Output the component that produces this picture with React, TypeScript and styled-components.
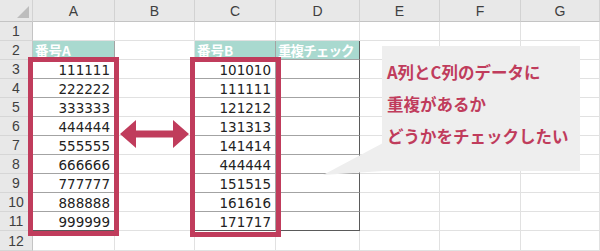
import styled, { createGlobalStyle } from "styled-components";

const GlobalStyle = createGlobalStyle`
  body {
    margin: 0;
    background: #ffffff;
  }
`;

const RED = "#c03c5c";

const Sheet = styled.div`
  position: relative;
  width: 600px;
  height: 251px;
  overflow: hidden;
  background: #ffffff;
`;

const Grid = styled.div`
  display: grid;
  grid-template-columns: 33px 82px 80px 81px 84px 80px 81px 79px;
  grid-template-rows: 22px repeat(11, 19px) 20px;
`;

const Corner = styled.div`
  position: relative;
  background: #e8e8e8;
  border-right: 1px solid #d2d2d2;
  border-bottom: 1px solid #c4c4c4;
  box-sizing: border-box;

  &::after {
    content: "";
    position: absolute;
    right: 3px;
    bottom: 3px;
    width: 0;
    height: 0;
    border-left: 12px solid transparent;
    border-bottom: 12px solid #bdbdbd;
  }
`;

const ColHead = styled.div`
  background: #e8e8e8;
  border-right: 1px solid #d2d2d2;
  border-bottom: 1px solid #c4c4c4;
  box-sizing: border-box;
  display: flex;
  align-items: center;
  justify-content: center;
  font-family: "Liberation Sans", Arial, sans-serif;
  font-size: 14px;
  color: #3f3f3f;
`;

const RowHead = styled.div`
  background: #e8e8e8;
  border-right: 1px solid #c4c4c4;
  border-bottom: 1px solid #d6d6d6;
  box-sizing: border-box;
  display: flex;
  align-items: center;
  justify-content: center;
  font-family: "Liberation Sans", Arial, sans-serif;
  font-size: 14px;
  color: #3f3f3f;
`;

type Kind = "plain" | "head" | "num" | "check";

const Cell = styled.div<{ $kind: Kind; $edge?: boolean; $last?: boolean; $tight?: boolean }>`
  box-sizing: border-box;
  display: flex;
  align-items: center;
  justify-content: ${(p) => (p.$kind === "head" ? "flex-start" : "flex-end")};
  padding: ${(p) => (p.$kind === "head" ? "0 0 0 2px" : "1px 4px 0 0")};
  background: ${(p) => (p.$kind === "head" ? "#a9d9cf" : "#ffffff")};
  border-right: 1px solid
    ${(p) => (p.$edge ? "#5a5a5a" : p.$kind === "plain" ? "#e1e1e1" : "#a3a3a3")};
  border-bottom: 1px solid
    ${(p) => (p.$last ? "#5a5a5a" : p.$kind === "plain" ? "#e1e1e1" : "#a3a3a3")};
  font-family: ${(p) =>
    p.$kind === "head"
      ? `"Noto Sans CJK JP", "Noto Sans", sans-serif`
      : `"DejaVu Sans", "Liberation Sans", sans-serif`};
  font-size: 13.5px;
  letter-spacing: ${(p) => (p.$tight ? "-0.9px" : "0")};
  font-weight: ${(p) => (p.$kind === "head" ? 700 : 400)};
  color: ${(p) => (p.$kind === "head" ? "#ffffff" : "#222222")};
  white-space: nowrap;
  overflow: hidden;
`;

const RedFrame = styled.div<{ $left: number; $height: number }>`
  position: absolute;
  top: 57px;
  left: ${(p) => p.$left}px;
  width: 91px;
  height: ${(p) => p.$height}px;
  border: 5px solid ${RED};
  box-sizing: border-box;
`;

const ArrowSvg = styled.svg`
  position: absolute;
  left: 119px;
  top: 119px;
`;

const Bubble = styled.div`
  position: absolute;
  left: 382px;
  top: 46px;
  width: 198px;
  height: 125px;
  background: #eeeeee;
  box-sizing: border-box;
  padding: 10px 0 0 5px;
  display: flex;
  flex-direction: column;
`;

const BubbleLine = styled.div`
  font-family: "Noto Sans CJK JP", "Noto Sans", sans-serif;
  font-size: 16.5px;
  font-weight: 700;
  line-height: 32px;
  color: ${RED};
  white-space: nowrap;
`;

const TailSvg = styled.svg`
  position: absolute;
  left: 322px;
  top: 140px;
`;

const colsA = ["111111", "222222", "333333", "444444", "555555", "666666", "777777", "888888", "999999"];
const colsC = ["101010", "111111", "121212", "131313", "141414", "444444", "151515", "161616", "171717"];
const letters = ["A", "B", "C", "D", "E", "F", "G"];

function Row({ n }: { n: number }) {
  const i = n - 3;
  const inTable = n >= 3 && n <= 11;
  const last = n === 11;
  return (
    <>
      <RowHead>{n}</RowHead>
      {n === 2 ? (
        <>
          <Cell $kind="head">番号A</Cell>
          <Cell $kind="plain" />
          <Cell $kind="head">番号B</Cell>
          <Cell $kind="head" $edge $tight>
            重複チェック
          </Cell>
        </>
      ) : inTable ? (
        <>
          <Cell $kind="num" $last={last}>
            {colsA[i]}
          </Cell>
          <Cell $kind="plain" />
          <Cell $kind="num" $last={last}>
            {colsC[i]}
          </Cell>
          <Cell $kind="check" $edge $last={last} />
        </>
      ) : (
        <>
          <Cell $kind="plain" />
          <Cell $kind="plain" />
          <Cell $kind="plain" />
          <Cell $kind="plain" />
        </>
      )}
      <Cell $kind="plain" />
      <Cell $kind="plain" />
      <Cell $kind="plain" />
    </>
  );
}

export default function App() {
  return (
    <>
      <GlobalStyle />
      <Sheet>
        <Grid>
          <Corner />
          {letters.map((l) => (
            <ColHead key={l}>{l}</ColHead>
          ))}
          {Array.from({ length: 12 }, (_, k) => (
            <Row key={k} n={k + 1} />
          ))}
        </Grid>

        <RedFrame $left={28} $height={179} />
        <RedFrame $left={190} $height={180} />

        <ArrowSvg width="72" height="30" viewBox="0 0 72 30">
          <polygon
            points="1,15 17,1 17,11.5 54,11.5 54,1 70,15 54,29 54,18.5 17,18.5 17,29"
            fill={RED}
          />
        </ArrowSvg>

        <TailSvg width="62" height="36" viewBox="0 0 62 36">
          <polygon points="61,3 1,35 61,31" fill="#eeeeee" />
        </TailSvg>
        <Bubble>
          <BubbleLine>A列とC列のデータに</BubbleLine>
          <BubbleLine>重複があるか</BubbleLine>
          <BubbleLine>どうかをチェックしたい</BubbleLine>
        </Bubble>
      </Sheet>
    </>
  );
}
